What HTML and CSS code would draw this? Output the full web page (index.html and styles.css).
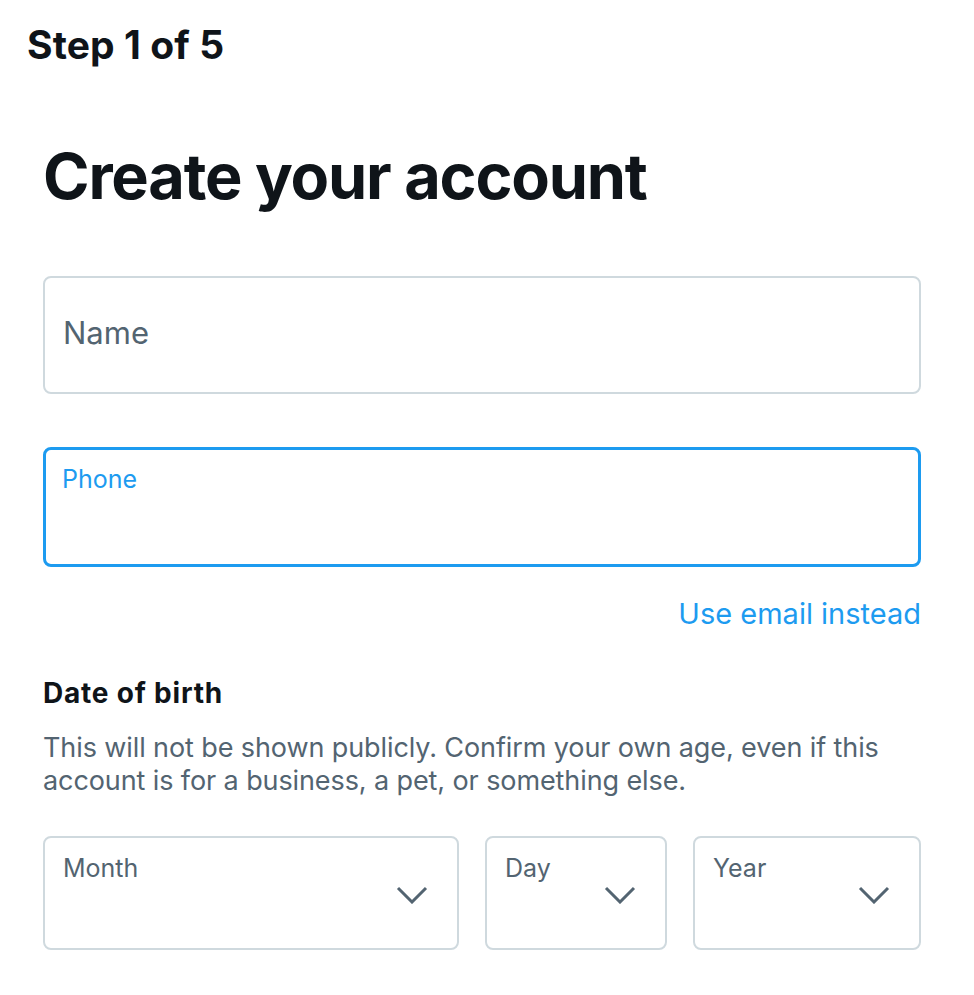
FILE: index.html
```html
<!DOCTYPE html>
<html lang="en">
<head>
    <meta charset="UTF-8">
    <meta name="viewport" content="width=device-width, initial-scale=1.0">
    <title>Create your account</title>
    <link rel="stylesheet" href="styles.css">
</head>
<body>
    <header class="step-bar">
        <h1>Step 1 of 5</h1>
    </header>

    <main class="signup">
        <h2 class="signup-title">Create your account</h2>

        <div class="field">
            <span class="placeholder">Name</span>
        </div>

        <div class="field focused">
            <label class="field-label" for="phone">Phone</label>
            <input type="text" id="phone" name="phone">
        </div>

        <div class="switch-row">
            <a href="#" class="switch-link">Use email instead</a>
        </div>

        <h3 class="dob-title">Date of birth</h3>
        <p class="dob-note">This will not be shown publicly. Confirm your own age, even if this account is for a business, a pet, or something else.</p>

        <div class="dob-selects">
            <div class="select-box">
                <span class="select-label">Month</span>
                <svg class="chevron" viewBox="0 0 32 18"><path d="M2 2 L16 16 L30 2"/></svg>
            </div>
            <div class="select-box">
                <span class="select-label">Day</span>
                <svg class="chevron" viewBox="0 0 32 18"><path d="M2 2 L16 16 L30 2"/></svg>
            </div>
            <div class="select-box">
                <span class="select-label">Year</span>
                <svg class="chevron" viewBox="0 0 32 18"><path d="M2 2 L16 16 L30 2"/></svg>
            </div>
        </div>
    </main>
</body>
</html>
```

FILE: styles.css
```css
/* General Styles */
body {
    font-family: Inter, "Noto Sans", sans-serif;
    margin: 0;
    padding: 0;
    background-color: #ffffff;
    color: #0f1419;
}

/* Step header */
.step-bar {
    padding: 25px 27px 0;
}

.step-bar h1 {
    margin: 0;
    font-size: 39px;
    font-weight: 700;
    line-height: 40px;
    letter-spacing: 0.1px;
}

/* Form */
.signup {
    padding: 0 53px 0 43px;
}

.signup-title {
    margin: 71px 0 0;
    font-size: 63px;
    font-weight: 700;
    line-height: 80px;
    letter-spacing: -1.2px;
}

.field {
    height: 118px;
    border: 2px solid #cfd9de;
    border-radius: 8px;
    box-sizing: border-box;
    margin-top: 60px;
    padding: 0 18px;
    display: flex;
    align-items: center;
}

.field + .field {
    margin-top: 53px;
}

.placeholder {
    font-size: 31px;
    line-height: 38px;
    color: #536471;
    margin-top: -4px;
}

.field.focused {
    height: 120px;
    border: 3px solid #1d9bf0;
    flex-direction: column;
    align-items: stretch;
    justify-content: flex-start;
    padding: 13px 16px 0;
}

.field-label {
    font-size: 25px;
    line-height: 32px;
    color: #1d9bf0;
}

.field input {
    border: none;
    outline: none;
    padding: 0;
    font-size: 29px;
    background: transparent;
}

.switch-row {
    display: flex;
    justify-content: flex-end;
    margin-top: 29px;
}

.switch-link {
    font-size: 29px;
    line-height: 36px;
    color: #1d9bf0;
    text-decoration: none;
}

.dob-title {
    margin: 44px 0 0;
    font-size: 28px;
    font-weight: 700;
    line-height: 34px;
    letter-spacing: 0.8px;
}

.dob-note {
    margin: 21px 0 0;
    font-size: 27px;
    line-height: 33px;
    letter-spacing: -0.1px;
    color: #536471;
}

.dob-selects {
    display: grid;
    grid-template-columns: 416px 182px 228px;
    gap: 26px;
    margin-top: 39px;
}

.select-box {
    position: relative;
    height: 114px;
    border: 2px solid #cfd9de;
    border-radius: 8px;
    box-sizing: border-box;
    padding: 14px 18px 0;
}

.select-label {
    font-size: 25px;
    line-height: 32px;
    color: #536471;
}

.chevron {
    position: absolute;
    right: 29px;
    top: 48px;
    width: 32px;
    height: 18px;
    fill: none;
    stroke: #536471;
    stroke-width: 3;
}
```
